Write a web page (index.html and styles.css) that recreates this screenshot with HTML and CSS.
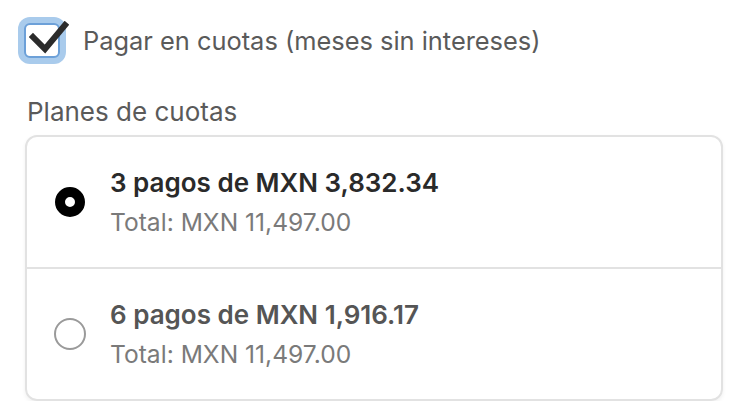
FILE: index.html
```html
<!DOCTYPE html>
<html lang="es">

<head>
    <meta charset="UTF-8">
    <meta name="viewport" content="width=device-width, initial-scale=1.0">
    <title>Cuotas</title>
    <link rel="stylesheet" href="styles.css">
</head>

<body>
    <div class="installments">
        <label class="check-row">
            <span class="check-box">
                <svg class="check-mark" width="40" height="36" viewBox="0 0 40 36">
                    <path d="M4 16 L16 28 L36 4" fill="none" stroke="#2b2b2b" stroke-width="6" stroke-linecap="square" />
                </svg>
            </span>
            <span class="check-label">Pagar en cuotas (meses sin intereses)</span>
        </label>

        <div class="plans-title">Planes de cuotas</div>

        <div class="plans">
            <div class="plan">
                <span class="radio-slot"><span class="radio selected"></span></span>
                <div class="plan-text">
                    <div class="plan-name bold">3 pagos de MXN 3,832.34</div>
                    <div class="plan-total">Total: MXN 11,497.00</div>
                </div>
            </div>
            <div class="plan">
                <span class="radio-slot"><span class="radio"></span></span>
                <div class="plan-text">
                    <div class="plan-name">6 pagos de MXN 1,916.17</div>
                    <div class="plan-total">Total: MXN 11,497.00</div>
                </div>
            </div>
        </div>
    </div>
</body>

</html>
```

FILE: styles.css
```css
body {
    margin: 0;
    background-color: white;
    font-family: Inter, "Noto Sans", sans-serif;
}

.installments {
    padding: 23px 25px 0 24px;
}

.check-row {
    display: flex;
    align-items: center;
    gap: 23px;
}

.check-box {
    position: relative;
    width: 32px;
    height: 31px;
    border: 2px solid #6ca0d8;
    border-radius: 6px;
    box-shadow: 0 0 0 6px #a9cbec;
    background-color: white;
    flex-shrink: 0;
}

.check-mark {
    position: absolute;
    left: 3px;
    top: -4px;
}

.check-label {
    font-size: 25.4px;
    color: #5a5a5a;
}

.plans-title {
    margin-top: 38px;
    margin-left: 3px;
    font-size: 26px;
    color: #5a5a5a;
}

.plans {
    margin-top: 8px;
    margin-left: 1px;
    border: 2px solid #e2e2e2;
    border-radius: 12px;
    box-shadow: 0 2px 4px rgba(0, 0, 0, 0.06);
}

.plan {
    display: flex;
    align-items: center;
    height: 130px;
    padding-left: 27px;
}

.plan + .plan {
    border-top: 2px solid #e2e2e2;
}

.radio-slot {
    display: flex;
    align-items: center;
    justify-content: center;
    width: 32px;
    height: 32px;
    flex-shrink: 0;
}

.radio {
    width: 28px;
    height: 28px;
    border: 2px solid #9a9a9a;
    border-radius: 50%;
    box-sizing: content-box;
}

.radio.selected {
    width: 10px;
    height: 10px;
    border: 10px solid black;
}

.plan-text {
    margin-left: 24px;
}

.plan-name {
    font-size: 26px;
    font-weight: 600;
    color: #555;
}

.plan-name.bold {
    color: #2a2a2a;
}

.plan-total {
    margin-top: 9px;
    font-size: 24.6px;
    color: #7a7a7a;
}
```
